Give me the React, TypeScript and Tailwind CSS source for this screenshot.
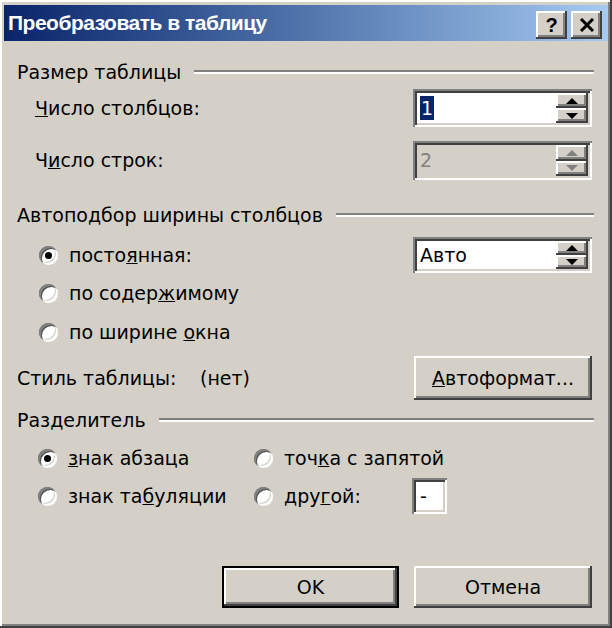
const raised =
  'shadow-[inset_-2px_-2px_#404040,inset_2px_2px_#ffffff,inset_-4px_-4px_#808080,inset_4px_4px_#d4d0c8]';
const sunken =
  'shadow-[inset_2px_2px_#808080,inset_-2px_-2px_#ffffff,inset_4px_4px_#404040,inset_-4px_-4px_#d4d0c8]';

function GroupHeader({ label, className = '' }: { label: string; className?: string }) {
  return (
    <div className={`flex h-[22px] items-center ${className}`}>
      <span>{label}</span>
      <div className="ml-[13px] flex-1 border-t-2 border-b-2 border-t-[#808080] border-b-white" />
    </div>
  );
}

function Arrow({ up, disabled }: { up: boolean; disabled?: boolean }) {
  const color = disabled ? 'border-b-[#808080] border-t-[#808080]' : 'border-b-black border-t-black';
  return up ? (
    <span className={`h-0 w-0 border-x-[6px] border-b-[6px] border-x-transparent ${color}`} />
  ) : (
    <span className={`h-0 w-0 border-x-[6px] border-t-[6px] border-x-transparent ${color}`} />
  );
}

function Spin({
  value,
  disabled,
  selected,
  height,
}: {
  value: string;
  disabled?: boolean;
  selected?: boolean;
  height: string;
}) {
  return (
    <div
      className={`flex w-[179px] p-[4px] ${height} ${sunken} ${disabled ? 'bg-[#d4d0c8]' : 'bg-white'}`}
    >
      <div className="flex flex-1 items-center pl-[3px]">
        {selected ? (
          <span className="bg-[#0a246a] px-[1px] leading-[24px] text-white">{value}</span>
        ) : (
          <span className={disabled ? 'text-[#808080]' : 'text-black'}>{value}</span>
        )}
      </div>
      <div className="flex w-[32px] flex-col">
        <div className={`flex flex-1 items-center justify-center bg-[#d4d0c8] ${raised}`}>
          <Arrow up disabled={disabled} />
        </div>
        <div className={`flex flex-1 items-center justify-center bg-[#d4d0c8] ${raised}`}>
          <Arrow up={false} disabled={disabled} />
        </div>
      </div>
    </div>
  );
}

function Radio({ checked, children }: { checked?: boolean; children: React.ReactNode }) {
  return (
    <div className="flex items-center gap-[11px]">
      <span className="flex h-[19px] w-[19px] items-center justify-center rounded-full bg-white shadow-[inset_2px_2px_#808080,inset_-2px_-2px_#ffffff,inset_3px_3px_#505050,inset_-3px_-3px_#d4d0c8]">
        {checked && <span className="h-[7px] w-[7px] rounded-full bg-black" />}
      </span>
      <span>{children}</span>
    </div>
  );
}

export default function App() {
  return (
    <div
      className={`flex h-[628px] w-[612px] flex-col bg-[#d4d0c8] p-[4px] font-['DejaVu_Sans',sans-serif] text-[19px] text-black ${raised}`}
    >
      <div className="mt-[1px] flex h-[36px] items-center bg-linear-to-r from-[#0a246a] to-[#a6caf0] pl-[4px] pr-[6px]">
        <span className="flex-1 font-['Liberation_Sans',sans-serif] text-[21px] font-bold tracking-[-0.5px] text-white">
          Преобразовать в таблицу
        </span>
        <div className="flex gap-[4px] pt-[3px]">
          <div
            className={`flex h-[28px] w-[31px] items-center justify-center bg-[#d4d0c8] font-['Liberation_Sans',sans-serif] text-[20px] font-bold ${raised}`}
          >
            ?
          </div>
          <div className={`flex h-[28px] w-[31px] items-center justify-center bg-[#d4d0c8] ${raised}`}>
            <svg width="16" height="14" viewBox="0 0 16 14">
              <path d="M2 1 L14 13 M14 1 L2 13" stroke="black" strokeWidth="3" />
            </svg>
          </div>
        </div>
      </div>

      <div className="flex flex-1 flex-col pl-[13px] pr-[14px]">
        <GroupHeader label="Размер таблицы" className="mt-[20px]" />
        <div className="mt-[6px] flex items-center justify-between pr-[2px]">
          <span className="pl-[18px]">
            <u>Ч</u>исло столбцов:
          </span>
          <Spin value="1" selected height="h-[38px]" />
        </div>
        <div className="mt-[14px] flex items-center justify-between pr-[2px]">
          <span className="pl-[18px]">
            Ч<u>и</u>сло строк:
          </span>
          <Spin value="2" disabled height="h-[39px]" />
        </div>

        <GroupHeader label="Автоподбор ширины столбцов" className="mt-[24px]" />
        <div className="mt-[10px] flex h-[38px] items-center justify-between pl-[22px] pr-[2px]">
          <Radio checked>
            посто<u>я</u>нная:
          </Radio>
          <Spin value="Авто" height="h-[36px]" />
        </div>
        <div className="flex h-[39px] items-center pl-[22px]">
          <Radio>
            по содер<u>ж</u>имому
          </Radio>
        </div>
        <div className="flex h-[38px] items-center pl-[22px]">
          <Radio>
            по ширине <u>о</u>кна
          </Radio>
        </div>

        <div className="mt-[5px] flex h-[44px] items-center pr-[2px]">
          <span className="w-[183px]">Стиль таблицы:</span>
          <span className="flex-1">(нет)</span>
          <div className={`flex h-[44px] w-[178px] items-center justify-center ${raised}`}>
            <span>
              <u>А</u>втоформат...
            </span>
          </div>
        </div>

        <GroupHeader label="Разделитель" className="mt-[9px]" />
        <div className="mt-[9px] flex h-[37px] items-center">
          <div className="w-[237px] pl-[21px]">
            <Radio checked>
              <u>з</u>нак абзаца
            </Radio>
          </div>
          <Radio>
            точ<u>к</u>а с запятой
          </Radio>
        </div>
        <div className="flex h-[38px] items-center">
          <div className="w-[237px] pl-[21px]">
            <Radio>
              знак та<u>б</u>уляции
            </Radio>
          </div>
          <div className="w-[158px]">
            <Radio>
              дру<u>г</u>ой:
            </Radio>
          </div>
          <div className={`flex h-[36px] w-[35px] items-center bg-white pl-[8px] ${sunken}`}>-</div>
        </div>

        <div className="mt-[51px] flex justify-end gap-[15px] pr-[2px]">
          <div className="flex h-[42px] w-[177px] items-center justify-center bg-black p-[2px]">
            <div className={`flex h-full w-full items-center justify-center bg-[#d4d0c8] ${raised}`}>
              OK
            </div>
          </div>
          <div className={`flex h-[42px] w-[178px] items-center justify-center ${raised}`}>Отмена</div>
        </div>
      </div>
    </div>
  );
}
